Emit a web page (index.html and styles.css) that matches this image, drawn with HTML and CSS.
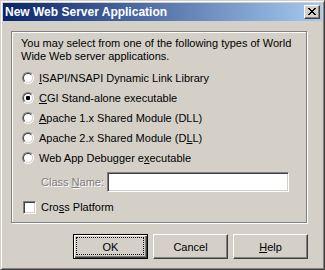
FILE: index.html
```html
<!DOCTYPE html>
<html>
<head>
<meta charset="utf-8">
<link rel="stylesheet" href="styles.css">
</head>
<body>
<div class="window">
  <div class="titlebar">
    <span class="title">New Web Server Application</span>
    <span class="close-btn">
      <svg width="8" height="7" viewBox="0 0 8 7" shape-rendering="crispEdges">
        <path fill="#000" d="M0 0h2v1H0zM6 0h2v1H6zM1 1h2v1H1zM5 1h2v1H5zM2 2h4v1H2zM3 3h2v1H3zM2 4h4v1H2zM1 5h2v1H1zM5 5h2v1H5zM0 6h2v1H0zM6 6h2v1H6z"/>
      </svg>
    </span>
  </div>
  <div class="client">
    <div class="group">
      <p class="intro">You may select from one of the following types of World Wide Web server applications.</p>
      <div class="radios">
        <div class="row"><span class="radio"></span><span class="label"><u>I</u>SAPI/NSAPI Dynamic Link Library</span></div>
        <div class="row"><span class="radio checked"></span><span class="label"><u>C</u>GI Stand-alone executable</span></div>
        <div class="row"><span class="radio"></span><span class="label"><u>A</u>pache 1.x Shared Module (DLL)</span></div>
        <div class="row"><span class="radio"></span><span class="label">Apache 2.x Shared Module (D<u>L</u>L)</span></div>
        <div class="row"><span class="radio"></span><span class="label">Web App Debugger e<u>x</u>ecutable</span></div>
      </div>
      <div class="class-row">
        <span class="disabled-label">Class <u>N</u>ame:</span>
        <span class="field"></span>
      </div>
      <div class="check-row">
        <span class="checkbox"></span><span class="label">Cro<u>s</u>s Platform</span>
      </div>
    </div>
    <div class="buttons">
      <div class="btn default">OK</div>
      <div class="btn">Cancel</div>
      <div class="btn"><u>H</u>elp</div>
    </div>
  </div>
</div>
</body>
</html>
```

FILE: styles.css
```css
html, body {
  margin: 0;
  padding: 0;
  background: #d4d0c8;
}
body {
  font-family: "Liberation Sans", Arial, sans-serif;
  font-size: 11px;
  color: #000;
}
u { text-decoration: underline; text-underline-offset: 1px; }

.window {
  box-sizing: border-box;
  width: 325px;
  height: 270px;
  background: #d4d0c8;
  border-style: solid;
  border-width: 1px;
  border-color: #d4d0c8 #404040 #404040 #d4d0c8;
  box-shadow: inset 1px 1px 0 #fff, inset -1px -1px 0 #808080;
  padding: 2px 2px 2px 2px;
  display: flex;
  flex-direction: column;
}

.titlebar {
  height: 18px;
  background: linear-gradient(to right, #0a246a, #a6caf0);
  display: flex;
  align-items: center;
  justify-content: space-between;
  padding: 0 2px 0 2px;
}
.title {
  color: #fff;
  font-weight: bold;
  font-size: 12px;
  line-height: 18px;
  white-space: nowrap;
}
.close-btn {
  box-sizing: border-box;
  width: 16px;
  height: 14px;
  background: #d4d0c8;
  border-style: solid;
  border-width: 1px;
  border-color: #fff #404040 #404040 #fff;
  box-shadow: inset -1px -1px 0 #808080;
  display: flex;
  align-items: center;
  justify-content: center;
  padding-bottom: 1px;
  padding-right: 1px;
}
.close-btn svg { display: block; }

.client {
  flex: 1;
  padding: 10px 14px 0 8px;
}

.group {
  box-sizing: border-box;
  width: 296px;
  height: 192px;
  border: 1px solid #808080;
  box-shadow: inset 1px 1px 0 #fff, 1px 1px 0 #fff;
  padding: 5px 0 0 9px;
}

.intro {
  margin: 0;
  line-height: 13px;
  width: 284px;
}

.radios {
  margin-top: 5px;
  display: flex;
  flex-direction: column;
}
.row, .check-row {
  height: 20px;
  display: flex;
  align-items: center;
}
.radio {
  box-sizing: border-box;
  position: relative;
  width: 12px;
  height: 12px;
  margin-left: 1px;
  margin-right: 5px;
  border-radius: 50%;
  border: 1px solid;
  border-color: #808080 #fff #fff #808080;
  flex: none;
}
.radio::before {
  content: "";
  position: absolute;
  inset: 0;
  border-radius: 50%;
  border: 1px solid;
  border-color: #404040 #d4d0c8 #d4d0c8 #404040;
  background: #fff;
}
.radio.checked::after {
  content: "";
  position: absolute;
  left: 3px;
  top: 3px;
  width: 4px;
  height: 4px;
  border-radius: 1px;
  background: #000;
}
.label { white-space: nowrap; }

.class-row {
  margin-top: 4px;
  height: 20px;
  display: flex;
  align-items: center;
  padding-left: 20px;
}
.disabled-label {
  color: #808080;
  text-shadow: 1px 1px 0 #fff;
  width: 66px;
}
.field {
  box-sizing: border-box;
  width: 182px;
  height: 20px;
  background: #fff;
  border: 1px solid;
  border-color: #808080 #fff #fff #808080;
  box-shadow: inset 1px 1px 0 #404040, inset -1px -1px 0 #d4d0c8;
}

.check-row { margin-top: 5px; }
.checkbox {
  box-sizing: border-box;
  width: 13px;
  height: 13px;
  margin-left: 2px;
  margin-right: 5px;
  background: #fff;
  border: 1px solid;
  border-color: #808080 #fff #fff #808080;
  box-shadow: inset 1px 1px 0 #404040, inset -1px -1px 0 #d4d0c8;
  flex: none;
}

.buttons {
  margin-top: 11px;
  display: flex;
  justify-content: flex-end;
  gap: 5px;
}
.btn {
  box-sizing: border-box;
  position: relative;
  width: 75px;
  height: 25px;
  display: flex;
  align-items: center;
  justify-content: center;
  background: #d4d0c8;
  border: 1px solid;
  border-color: #fff #404040 #404040 #fff;
  box-shadow: inset -1px -1px 0 #808080;
}
.btn.default {
  border-color: #000;
  box-shadow: inset 1px 1px 0 #fff, inset -1px -1px 0 #404040, inset -2px -2px 0 #808080;
}
.btn.default::after {
  content: "";
  position: absolute;
  left: 2px;
  top: 2px;
  right: 3px;
  bottom: 3px;
  border: 1px dotted #000;
}
```
